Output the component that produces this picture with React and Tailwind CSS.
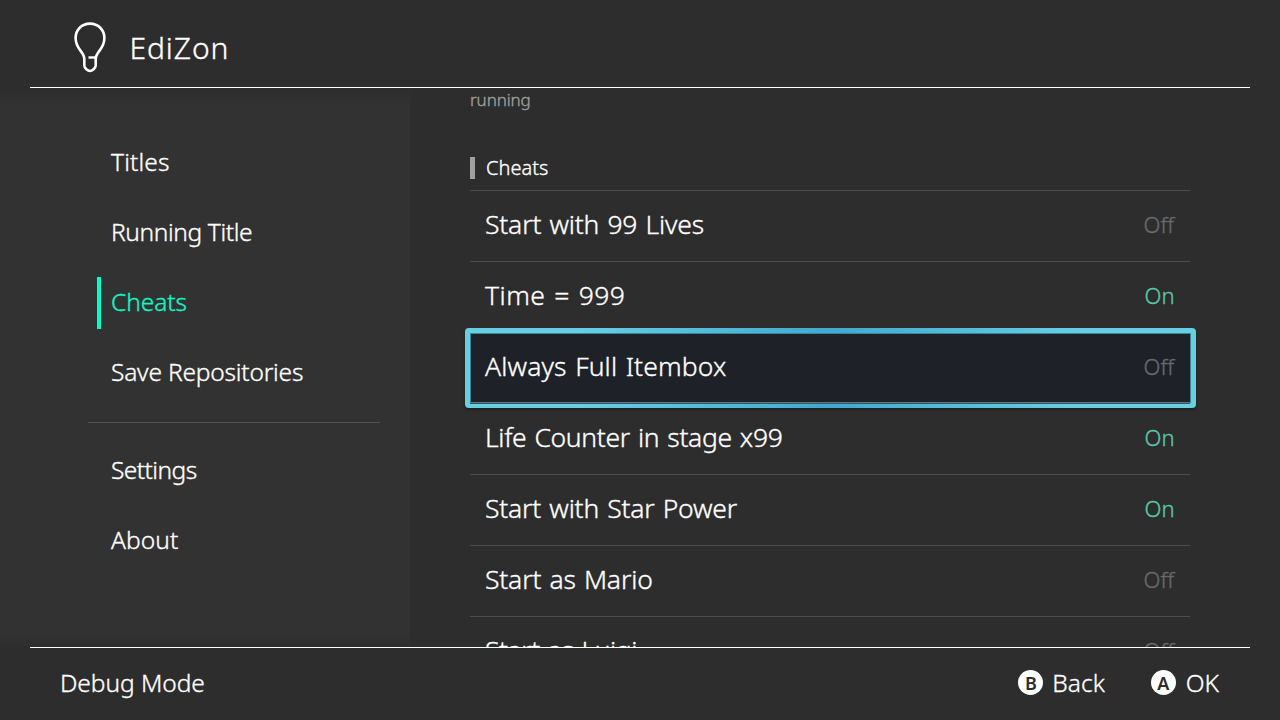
function Bulb() {
  return (
    <svg className="h-[52px] w-[34px]" viewBox="0 0 34 52" fill="none" stroke="#fff" strokeWidth="2.6" strokeLinejoin="round">
      <path d="M17 2.600C8.800 2.600 2.600 8.900 2.600 17c0 5.200 2 8.800 4.700 12.400 2.600 3.400 4 5.400 4 8.600v6.600c0 2.600 3.600 5.400 5.700 5.400s5.700-2.800 5.700-5.400V38c0-3.200 1.400-5.200 4-8.600 2.700-3.600 4.700-7.200 4.700-12.400C31.400 8.900 25.200 2.600 17 2.600Z" />
      <path d="M15.500 36.500h7.500" strokeWidth="2.400" />
    </svg>
  );
}

function NavItem({ label, active, spacing }) {
  return (
    <li className="flex h-[70px] items-start">
      <span className={`mt-[11px] h-[52px] w-1 ${active ? "bg-[#00ffc8]" : ""}`} />
      <span className={`ml-[10px] pt-px text-[24.5px] leading-[70px] ${spacing} ${active ? "text-[#14f5c5]" : "text-white"}`}>{label}</span>
    </li>
  );
}

const cheats = [
  { name: "Start with 99 Lives", on: false, spacing: "tracking-[-0.18px]" },
  { name: "Time = 999", on: true, spacing: "tracking-[0.45px]" },
  { name: "Always Full Itembox", on: false, spacing: "tracking-[0.13px]", selected: true },
  { name: "Life Counter in stage x99", on: true, spacing: "tracking-[-0.33px]" },
  { name: "Start with Star Power", on: true, spacing: "tracking-[-0.2px]" },
  { name: "Start as Mario", on: false, spacing: "tracking-[-0.18px]" },
  { name: "Start as Luigi", on: false, spacing: "tracking-[-0.45px]" },
];

function CheatRow({ name, on, spacing, selected }) {
  return (
    <li className="relative flex h-[71px] shrink-0 items-center justify-between border-t border-[#4d4d4d] pr-[15px] pb-[4px] pl-[15px]">
      {selected && (
        <span className="absolute -top-[5px] -right-[6px] -bottom-[5px] -left-[5px] rounded-[4px] bg-linear-to-r from-[#66d0e2] from-15% via-[#41a9d2] via-50% to-[#66d0e2] to-85% p-[5px] shadow-[0_2px_3px_rgba(0,0,0,0.3)]">
          <span className="block h-full border border-[#3b8499] bg-[#1e2127]" />
        </span>
      )}
      <span className={`relative text-[26.5px] leading-9 [word-spacing:1.5px] ${spacing}`}>{name}</span>
      <span className={`relative text-[22px] leading-9 ${on ? "tracking-[0.3px] text-[#58c8a5]" : "pr-px text-[#666a6c]"}`}>{on ? "On" : "Off"}</span>
    </li>
  );
}

function Hint({ button, label, spacing }) {
  return (
    <div className="flex items-center">
      <span className="flex size-[25px] items-center justify-center rounded-full bg-white text-[18px] leading-none font-semibold text-[#2d2d2d] [-webkit-text-stroke:0px]">{button}</span>
      <span className={`text-[24.5px] leading-8 ${spacing}`}>{label}</span>
    </div>
  );
}

export default function App() {
  return (
    <div className="flex h-[720px] w-[1280px] flex-col overflow-hidden bg-[#2d2d2d] font-['Noto_Sans','Open_Sans',sans-serif] font-light text-white [-webkit-text-stroke:0.35px_currentColor]">
      <header className="mx-[30px] flex h-[88px] shrink-0 items-center border-b border-white pl-[43px]">
        <div className="pt-[7px]">
          <Bulb />
        </div>
        <h1 className="ml-[22.5px] pt-[9px] text-[30px] leading-10 tracking-[0.9px]">EdiZon</h1>
      </header>

      <main className="flex h-[559px] shrink-0">
        <nav className="w-[410px] shrink-0 bg-linear-to-b from-[#2d2d2d] via-[#323232] via-[3%] to-[#323232] pt-[38px]">
          <ul className="pl-[97px]">
            <NavItem label="Titles" spacing="tracking-[0.15px]" />
            <NavItem label="Running Title" spacing="tracking-[-0.38px]" />
            <NavItem label="Cheats" active spacing="tracking-[-0.05px]" />
            <NavItem label="Save Repositories" spacing="tracking-[-0.2px]" />
          </ul>
          <div className="mt-4 mr-[30px] mb-[11px] ml-[88px] h-px bg-[#515151]" />
          <ul className="pl-[97px]">
            <NavItem label="Settings" spacing="tracking-[-0.55px]" />
            <NavItem label="About" spacing="tracking-[0.1px]" />
          </ul>
          <div className="mt-[62px] h-[11px] bg-linear-to-b from-[#323232] to-[#2d2d2d]" />
        </nav>

        <section className="ml-[60px] flex w-[720px] flex-col">
          <p className="h-[69px] pt-[2px] text-[17px] leading-5 tracking-[-0.1px] text-[#a0a0a0]">running</p>
          <div className="flex h-[33px] items-start">
            <span className="h-[22px] w-[5px] bg-[#a0a0a0]" />
            <h2 className="ml-[11px] pt-px text-[20px] leading-5">Cheats</h2>
          </div>
          <ul className="flex h-[457px] flex-col overflow-x-visible overflow-y-clip">
            {cheats.map((cheat) => (
              <CheatRow key={cheat.name} {...cheat} />
            ))}
          </ul>
        </section>
      </main>

      <footer className="mx-[30px] flex h-[73px] shrink-0 items-center justify-between border-t border-white pr-[31px] pb-[3px] pl-[30px]">
        <span className="text-[24.5px] leading-8 tracking-[-0.05px]">Debug Mode</span>
        <div className="flex items-center gap-[46px]">
          <Hint button="B" label="Back" spacing="ml-[9px]" />
          <Hint button="A" label="OK" spacing="ml-[10px]" />
        </div>
      </footer>
    </div>
  );
}
